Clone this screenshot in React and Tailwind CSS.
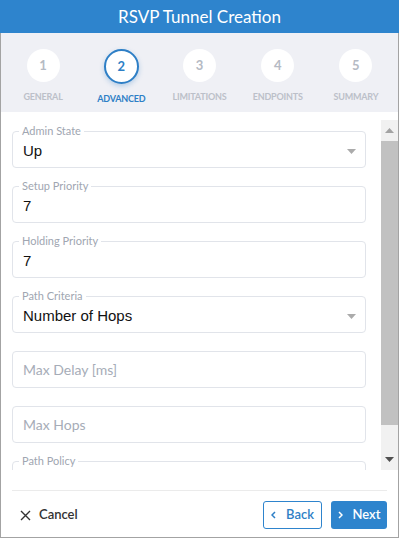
import React from "react";

const UI = { fontFamily: "Lato, 'Noto Sans', sans-serif" };
const VAL = { fontFamily: "'Liberation Sans', Arial, sans-serif" };

const steps = [
  { n: 1, label: "GENERAL" },
  { n: 2, label: "ADVANCED", active: true },
  { n: 3, label: "LIMITATIONS" },
  { n: 4, label: "ENDPOINTS" },
  { n: 5, label: "SUMMARY" },
];

function Caret() {
  return (
    <svg width="9" height="5" viewBox="0 0 9 5" className="shrink-0">
      <path d="M0 0 L9 0 L4.5 5 Z" fill="#ababab" />
    </svg>
  );
}

function Field({ label, value, select, placeholder }) {
  return (
    <div className="relative h-[37px] w-[354px] shrink-0 rounded-[4px] border border-[#e1e4ea] bg-white flex items-center pl-[10px] pr-[9px] pt-[3px]">
      {label && (
        <span
          className="absolute left-[6px] top-[-8px] bg-white px-[3px] text-[11px] leading-[14px] text-[#a0a6b1]"
          style={UI}
        >
          {label}
        </span>
      )}
      {value ? (
        <span className="flex-1 text-[15px] text-[#111]" style={VAL}>
          {value}
        </span>
      ) : (
        <span className="flex-1 text-[14px] text-[#a6acb7] -mt-[3px]" style={UI}>
          {placeholder}
        </span>
      )}
      {select && <Caret />}
    </div>
  );
}

export default function App() {
  return (
    <div className="w-[399px] h-[538px] flex flex-col bg-white overflow-hidden" style={UI}>
      <div className="h-[33px] shrink-0 bg-[#2e84cd] text-white text-[17px] flex items-center justify-center">
        RSVP Tunnel Creation
      </div>
      <div className="flex-1 flex flex-col border-x border-b border-[#a3a3a3] min-h-0">
        <div className="h-[79px] shrink-0 bg-[#eff0f5] grid grid-cols-5 px-[3px]">
          {steps.map((s) => (
            <div key={s.n} className="flex flex-col items-center pt-[16px]">
              <div
                className={
                  s.active
                    ? "w-[35px] h-[35px] rounded-full bg-white border-2 border-[#2e7fc6] shadow-[0_2px_5px_rgba(46,127,198,0.3)] flex items-center justify-center text-[13px] font-bold text-[#2e7fc6]"
                    : "w-[33px] h-[33px] rounded-full bg-white flex items-center justify-center text-[13px] font-bold text-[#b5bac4]"
                }
              >
                {s.n}
              </div>
              <div
                className={
                  "mt-[9px] text-[9px] tracking-[-0.2px] font-bold leading-[12px] " +
                  (s.active ? "text-[#2e7fc6]" : "text-[#bcc0c9]")
                }
              >
                {s.label}
              </div>
            </div>
          ))}
        </div>
        <div className="mt-[8px] h-[350px] shrink-0 flex">
          <div className="flex-1 overflow-hidden pl-[11px] pt-[11px] flex flex-col gap-[18px]">
            <Field label="Admin State" value="Up" select />
            <Field label="Setup Priority" value="7" />
            <Field label="Holding Priority" value="7" />
            <Field label="Path Criteria" value="Number of Hops" select />
            <Field placeholder="Max Delay [ms]" />
            <Field placeholder="Max Hops" />
            <Field label="Path Policy" value=" " select />
          </div>
          <div className="w-[17px] shrink-0 bg-[#f1f1f1] flex flex-col">
            <div className="h-[21px] flex items-center justify-center">
              <svg width="9" height="5" viewBox="0 0 9 5">
                <path d="M0 5 L9 5 L4.5 0 Z" fill="#a3a3a3" />
              </svg>
            </div>
            <div className="h-[284px] bg-[#c1c1c1]" />
            <div className="flex-1" />
            <div className="h-[22px] flex items-center justify-center">
              <svg width="9" height="5" viewBox="0 0 9 5">
                <path d="M0 0 L9 0 L4.5 5 Z" fill="#505050" />
              </svg>
            </div>
          </div>
        </div>
        <div className="mt-[20px] mx-[11px] border-t border-[#ebebeb]" />
        <div className="flex items-center px-[11px] pt-[10px]">
          <div className="flex items-center gap-[8px] pl-[8px] text-[13px] font-semibold text-[#333]">
            <svg width="11" height="11" viewBox="0 0 11 11">
              <path d="M1 1 L10 10 M10 1 L1 10" stroke="#333" strokeWidth="1.4" />
            </svg>
            Cancel
          </div>
          <div className="ml-auto flex items-center gap-[9px]">
            <div className="h-[28px] w-[59px] rounded-[3px] border border-[#2e84cd] bg-white flex items-center justify-center gap-[10px] text-[13px] font-semibold text-[#2e7fc6]">
              <svg width="5" height="8" viewBox="0 0 5 8">
                <path d="M4 1 L1 4 L4 7" stroke="#2e7fc6" strokeWidth="1.5" fill="none" />
              </svg>
              Back
            </div>
            <div className="h-[28px] w-[56px] rounded-[3px] bg-[#2e84cd] flex items-center justify-center gap-[10px] text-[13px] font-semibold text-white">
              <svg width="5" height="8" viewBox="0 0 5 8">
                <path d="M1 1 L4 4 L1 7" stroke="#fff" strokeWidth="1.5" fill="none" />
              </svg>
              Next
            </div>
          </div>
        </div>
      </div>
    </div>
  );
}
